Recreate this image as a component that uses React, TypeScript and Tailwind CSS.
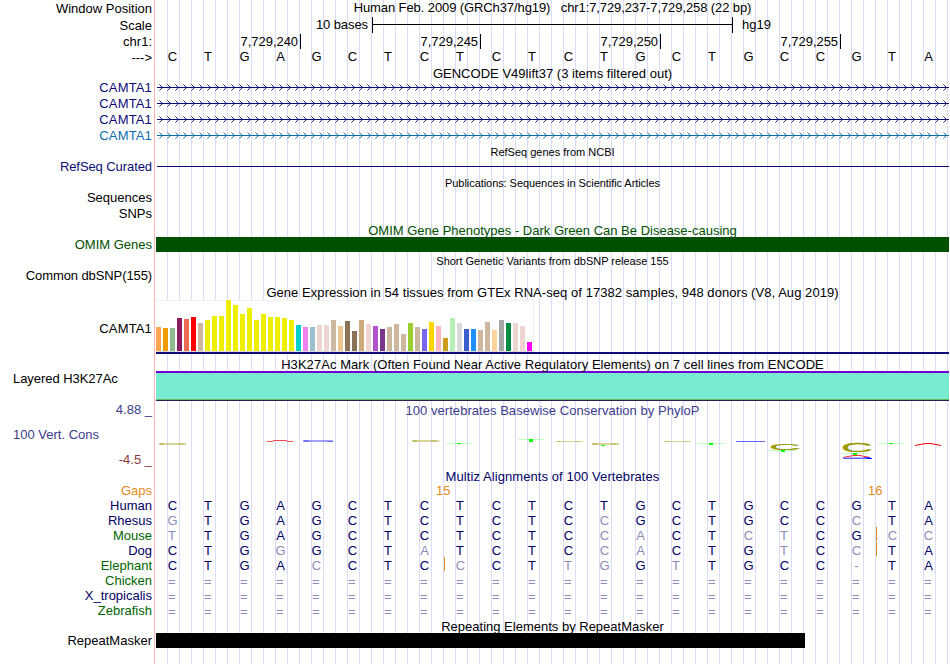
import clsx from "clsx";

const labels: { text: string; height: string; className?: string }[] = [
  { text: "Window Position", height: "h-[17px]" },
  { text: "Scale", height: "h-4" },
  { text: "chr1:", height: "h-4" },
  { text: "--->", height: "h-[30px]" },
  { text: "CAMTA1", height: "h-4", className: "text-[#0c0c78] tracking-[0.15px]" },
  { text: "CAMTA1", height: "h-4", className: "text-[#0c0c78] tracking-[0.15px]" },
  { text: "CAMTA1", height: "h-4", className: "text-[#0c0c78] tracking-[0.15px]" },
  { text: "CAMTA1", height: "h-[31px]", className: "text-[#0c6cac] tracking-[0.15px]" },
  { text: "RefSeq Curated", height: "h-[31px]", className: "text-[#0c0c78] tracking-[-0.08px]" },
  { text: "Sequences", height: "h-4" },
  { text: "SNPs", height: "h-[31px]" },
  { text: "OMIM Genes", height: "h-[31px]", className: "text-[#005000]" },
  { text: "Common dbSNP(155)", height: "h-[53px]", className: "tracking-[-0.1px]" },
  { text: "CAMTA1", height: "h-[50px]", className: "tracking-[0.15px]" },
  { text: "Layered H3K27Ac", height: "h-[31px]", className: "text-left pl-[13px] tracking-[-0.05px]" },
  { text: "4.88 _", height: "h-[25px]", className: "text-[#3c3c8c]" },
  { text: "100 Vert. Cons", height: "h-[25px]", className: "text-left pl-[13px] text-[#3c3c8c]" },
  { text: "-4.5 _", height: "h-[31px]", className: "text-[#8c3c3c]" },
  { text: "Gaps", height: "h-[15px]", className: "text-[#e68a1a]" },
  { text: "Human", height: "h-[15px]", className: "text-[#000064]" },
  { text: "Rhesus", height: "h-[15px]", className: "text-[#000064]" },
  { text: "Mouse", height: "h-[15px]", className: "text-[#006400]" },
  { text: "Dog", height: "h-[15px]", className: "text-[#000064]" },
  { text: "Elephant", height: "h-[15px]", className: "text-[#006400]" },
  { text: "Chicken", height: "h-[15px]", className: "text-[#006400]" },
  { text: "X_tropicalis", height: "h-[15px]", className: "text-[#000064]" },
  { text: "Zebrafish", height: "h-[30px]", className: "text-[#006400]" },
  { text: "RepeatMasker", height: "h-[15px]" },
];

const reference = "CTGAGCTCTCTCTGCTGCCGTA";

const alignments: { name: string; bases: string; gapAfter?: number }[] = [
  { name: "human", bases: "CTGAGCTCTCTCTGCTGCCGTA" },
  { name: "rhesus", bases: "GTGAGCTCTCTCCGCTGCCCTA" },
  { name: "mouse", bases: "TTGAGCTCTCTCCACTCTCGCC", gapAfter: 19 },
  { name: "dog", bases: "CTGGGCTATCTCCACTGTCCTA", gapAfter: 19 },
  { name: "elephant", bases: "CTGACCTCCCTTGGTTGCC-TA", gapAfter: 7 },
  { name: "chicken", bases: "======================" },
  { name: "x_tropicalis", bases: "======================" },
  { name: "zebrafish", bases: "======================" },
];

const tissues: [string, number][] = [
  ["#ffa54f", 24], ["#ee9a00", 23], ["#8fbc8f", 23], ["#8b1c62", 33], ["#ee6a50", 32], ["#ff0000", 34],
  ["#cdb79e", 28], ["#eeee00", 31], ["#eeee00", 35], ["#eeee00", 35], ["#eeee00", 51], ["#eeee00", 46],
  ["#eeee00", 37], ["#eeee00", 43], ["#eeee00", 31], ["#eeee00", 37], ["#eeee00", 34], ["#eeee00", 34],
  ["#eeee00", 33], ["#eeee00", 31], ["#00cdcd", 26], ["#ee82ee", 24], ["#9ac0cd", 24], ["#eed5d2", 26],
  ["#eed5d2", 26], ["#cdb79e", 31], ["#eec591", 25], ["#8b7355", 30], ["#8b7355", 20], ["#cdaa7d", 31],
  ["#eed5d2", 27], ["#b452cd", 25], ["#7a378b", 22], ["#cdb79e", 24], ["#cdb79e", 27], ["#cdb79e", 17],
  ["#9acd32", 28], ["#cdb79e", 24], ["#7a67ee", 22], ["#ffd700", 29], ["#ffb6c1", 25], ["#cd9b1d", 13],
  ["#b4eeb4", 33], ["#d9d9d9", 28], ["#3a5fcd", 22], ["#1e90ff", 22], ["#cdb79e", 21], ["#cdb79e", 29],
  ["#ffd39b", 21], ["#a6a6a6", 31], ["#008b45", 28], ["#eed5d2", 28], ["#eed5d2", 25], ["#ff00ff", 9],
];

const Title = ({ text, className }: { text: string; className: string }) => (
  <h2 className={clsx("text-center whitespace-pre", className)}>{text}</h2>
);

const Bases = ({ bases, match, gapAfter }: { bases: string; match?: string; gapAfter?: number }) => (
  <div className="flex h-[15px] -ml-[1.5px] w-[792px]">
    {bases.split("").map((base, i) => (
      <span
        key={i}
        className={clsx(
          "relative w-9 shrink-0 text-center",
          base === "T" && "pr-px",
          base === "=" && "pr-[1.5px] pt-px",
          match && (base === match[i] ? "text-[#000064]" : "text-[#8c8cb8]")
        )}
      >
        {base}
        {gapAfter === i && <i className="absolute left-[37.5px] -top-px h-[14px] w-px bg-[#e68a1a]" />}
      </span>
    ))}
  </div>
);

const Transcript = ({ id, color }: { id: string; color: string }) => (
  <svg width="793" height="16" className="block">
    <defs>
      <pattern id={id} x="3" y="0" width="8" height="16" patternUnits="userSpaceOnUse">
        <path d="M1 5h1v1h-1z M2 6h1v1h-1z M3 7h1v1h-1z M2 8h1v1h-1z M1 9h1v1h-1z" fill={color} fillOpacity="0.9" />
        <path d="M0 4h1v1h-1z M0 10h1v1h-1z" fill={color} fillOpacity="0.5" />
      </pattern>
    </defs>
    <rect x="1" y="7" width="792" height="1" fill={color} />
    <rect x="1" y="0" width="792" height="16" fill={`url(#${id})`} />
  </svg>
);

const Squashed = ({ base, x, y, sx, sy, color }: { base: string; x: number; y: number; sx: number; sy: number; color: string }) => (
  <text transform={`translate(${x} ${y}) scale(${sx} ${sy})`} fontSize="40" fill={color} stroke={color} strokeWidth="0.8">
    {base}
  </text>
);

const Flat = ({ x, y, w = 26, h = 1, color, opacity = 1 }: { x: number; y: number; w?: number; h?: number; color: string; opacity?: number }) => (
  <rect x={x} y={y} width={w} height={h} fill={color} opacity={opacity} />
);

const thymines: [number, number, number][] = [
  [290, 25, 1],
  [362, 21, 3],
  [542, 25, 2],
  [614, 32, 2],
  [686, 35, 2],
  [722, 25, 1],
];

const cytosines: [number, number, number][] = [
  [3, 25, 2],
  [256, 22, 2],
  [400, 23, 1],
  [436, 25, 2],
  [508, 23, 1],
];

const Conservation = () => (
  <svg width="793" height="51" className="block">
    {cytosines.map(([x, y, h]) => (
      <g key={x}>
        <Flat x={x} y={y} w={27} h={h} color="#999900" opacity={0.4} />
        <Flat x={x + 1} y={y} w={4} h={h} color="#999900" opacity={0.35} />
        <Flat x={x + 20} y={y} w={4} h={h} color="#999900" opacity={0.25} />
      </g>
    ))}
    {thymines.map(([x, y, h]) => (
      <g key={x}>
        <Flat x={x} y={y} color="#00ff00" opacity={0.25} />
        <Flat x={x + 11} y={y} w={4} h={h} color="#00ff00" />
      </g>
    ))}
    <Flat x={445} y={27} w={4} color="#00ff00" />
    <path d="M111 23.5 H117 M131 23.5 H137 M117 22.5 H131" stroke="#ff0000" strokeOpacity="0.7" />
    <Flat x={147} y={22} w={30} h={2} color="#3333ff" opacity={0.45} />
    <Flat x={148} y={22} w={5} h={2} color="#3333ff" opacity={0.4} />
    <Flat x={171} y={23} w={6} color="#3333ff" opacity={0.5} />
    <Flat x={580} y={23} w={29} color="#3333ff" opacity={0.75} />
    <Squashed base="C" x={613} y={32} sx={1.1} sy={0.24} color="#999900" />
    <Squashed base="C" x={685} y={34.4} sx={1.1} sy={0.33} color="#999900" />
    <path d="M687 39.5 L692 38.5 L698 37.5 H704 L709 38.5 L714 39.5" fill="none" stroke="#ff0000" strokeOpacity="0.8" />
    <path d="M687 39.5 H714" stroke="#4444ff" strokeOpacity="0.4" />
    <path d="M687 40.5 H716 M708 39.5 H714" stroke="#2222ff" strokeOpacity="0.7" />
    <path d="M711 40.5 H716" stroke="#0000ff" />
    <path d="M759 27.5 L764 26.5 L770 25.5 H775 L780 26.5 L785 27.5" fill="none" stroke="#ff0000" />
  </svg>
);

const GenomeTracks = () => (
  <div className="w-[793px] bg-[repeating-linear-gradient(to_right,transparent_0_11px,#dcdcf8_11px_12px)]">
    <Title className="h-[17px] tracking-[-0.1px]" text="Human Feb. 2009 (GRCh37/hg19)   chr1:7,729,237-7,729,258 (22 bp)" />
    <div className="flex h-[17px]">
      <span className="w-[212px] text-right tracking-[-0.08px]">10 bases</span>
      <div className="ml-1 flex h-4 w-[361px] items-center border-x border-black">
        <div className="mb-px h-px w-full bg-black" />
      </div>
      <span className="ml-[9px]">hg19</span>
    </div>
    <div className="flex h-[15px] text-right tracking-[-0.05px]">
      <span className="w-[145px] border-r border-black pr-0.5">7,729,240</span>
      <span className="w-[180px] border-r border-black pr-0.5">7,729,245</span>
      <span className="w-[180px] border-r border-black pr-0.5">7,729,250</span>
      <span className="w-[180px] border-r border-black pr-0.5">7,729,255</span>
    </div>
    <Bases bases={reference} />

    <Title className="mt-0.5 h-[14px] tracking-[0.02px]" text="GENCODE V49lift37 (3 items filtered out)" />
    <Transcript id="camta1-a" color="#0c0c78" />
    <Transcript id="camta1-b" color="#0c0c78" />
    <Transcript id="camta1-c" color="#0c0c78" />
    <Transcript id="camta1-d" color="#0c6cac" />

    <Title className="mt-px h-[15px] text-[11px]" text="RefSeq genes from NCBI" />
    <div className="ml-px mt-1.5 mb-[9px] h-px bg-[#0c0c78]" />

    <Title className="h-[47px] text-[11px] tracking-[-0.06px]" text="Publications: Sequences in Scientific Articles" />

    <Title className="h-[14px] text-[#005000]" text="OMIM Gene Phenotypes - Dark Green Can Be Disease-causing" />
    <div className="h-[15px] bg-[#005000]" />

    <Title className="mt-0.5 h-[31px] text-[11px] tracking-[-0.02px]" text="Short Genetic Variants from dbSNP release 155" />

    <Title className="h-[15px] tracking-[0.055px]" text="Gene Expression in 54 tissues from GTEx RNA-seq of 17382 samples, 948 donors (V8, Aug 2019)" />
    <div className="flex h-[52px] w-[378px] items-end gap-0.5 border-y border-r border-[#f0f0f0] border-b-[#dcdcdc] bg-white">
      {tissues.map(([color, height], i) => (
        <div key={i} className="w-[5px] shrink-0" style={{ backgroundColor: color, height }} />
      ))}
    </div>
    <div className="h-0.5 bg-[#0c0c78]" />

    <Title className="mt-[3px] h-[14px] tracking-[0.06px]" text="H3K27Ac Mark (Often Found Near Active Regulatory Elements) on 7 cell lines from ENCODE" />
    <div className="h-[30px] border-t-2 border-b border-t-[#7000d0] border-b-[#2a2050] bg-[#78ebd0]">
      <div className="mt-[26px] h-px bg-[#68b868]" />
    </div>

    <Title className="mt-0.5 h-[15px] tracking-[0.04px] text-[#3c3c8c]" text="100 vertebrates Basewise Conservation by PhyloP" />
    <Conservation />

    <Title className="h-[14px] tracking-[0.08px] text-[#000064]" text="Multiz Alignments of 100 Vertebrates" />
    <div className="flex h-[15px] text-[#e68a1a]">
      <span className="ml-[280px] w-[15px]">15</span>
      <span className="ml-[417px] w-[15px]">16</span>
    </div>
    {alignments.map((row) => (
      <Bases key={row.name} bases={row.bases} match={row.name === "human" ? row.bases : reference} gapAfter={row.gapAfter} />
    ))}

    <Title className="mt-px h-[14px]" text="Repeating Elements by RepeatMasker" />
    <div className="h-[15px] w-[649px] bg-black" />
  </div>
);

const App = () => {
  return (
    <div className="flex h-[664px] w-[950px] overflow-hidden bg-white font-['Liberation_Sans',Arial,sans-serif] text-[13px] leading-[15px] text-black">
      <div className="w-[152px] pt-px text-right">
        {labels.map((label, i) => (
          <div key={i} className={clsx("whitespace-pre", label.height, label.className)}>
            {label.text}
          </div>
        ))}
      </div>
      <div className="ml-0.5 mr-px w-px bg-[#ffb4b4]" />
      <GenomeTracks />
    </div>
  );
};

export default App;
